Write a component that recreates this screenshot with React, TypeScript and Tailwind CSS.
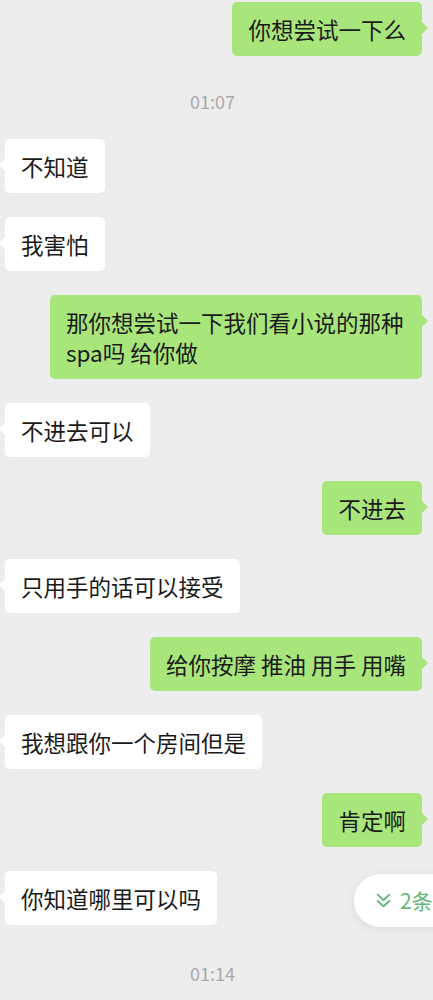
import React from "react";

const font = { fontFamily: '"Noto Sans CJK SC", "Noto Sans", sans-serif' };

function Left({ text }: { text: string }) {
  return (
    <div className="flex justify-start pl-[5px]">
      <div className="relative bg-white rounded-[5px] px-4 py-3 text-[22.5px] leading-[30px] text-[#1a1a1a] max-w-[370px]">
        <span className="absolute left-[-6px] top-[20px] w-0 h-0 border-y-[6px] border-y-transparent border-r-[6px] border-r-white" />
        {text}
      </div>
    </div>
  );
}

function Right({ text }: { text: string }) {
  return (
    <div className="flex justify-end pr-[11px]">
      <div className="relative bg-[#a8e67c] rounded-[5px] px-4 py-3 text-[22.5px] leading-[30px] text-[#1a1a1a] max-w-[372px]">
        <span className="absolute right-[-6px] top-[20px] w-0 h-0 border-y-[6px] border-y-transparent border-l-[6px] border-l-[#a8e67c]" />
        {text}
      </div>
    </div>
  );
}

function Time({ t, cls }: { t: string; cls: string }) {
  return (
    <div className={`text-center text-[18px] leading-[24px] text-[#a9a9a9] ${cls}`}>{t}</div>
  );
}

export default function App() {
  return (
    <div className="relative w-[433px] h-[1000px] bg-[#ededed] overflow-hidden" style={font}>
      <div className="pt-[2px] flex flex-col">
        <Right text="你想尝试一下么" />
        <Time t="01:07" cls="mt-[33px] mb-[26px] pr-[8px]" />
        <div className="flex flex-col gap-6">
          <Left text="不知道" />
          <Left text="我害怕" />
          <Right text="那你想尝试一下我们看小说的那种spa吗 给你做" />
          <Left text="不进去可以" />
          <Right text="不进去" />
          <Left text="只用手的话可以接受" />
          <Right text="给你按摩 推油 用手 用嘴" />
          <Left text="我想跟你一个房间但是" />
          <Right text="肯定啊" />
          <Left text="你知道哪里可以吗" />
        </div>
        <Time t="01:14" cls="mt-[36px] pr-[8px]" />
      </div>
      <div className="absolute left-[354px] top-[874px] h-[53px] w-[160px] bg-white rounded-l-full shadow-[0_2px_10px_rgba(0,0,0,0.08)] flex items-center pl-[21px] gap-[8px] whitespace-nowrap">
        <svg width="17" height="17" viewBox="0 0 16 16" fill="none" stroke="#5fb878" strokeWidth="1.8" strokeLinecap="round" strokeLinejoin="round">
          <path d="M2.5 2.5 L8 7.5 L13.5 2.5" />
          <path d="M2.5 8.5 L8 13.5 L13.5 8.5" />
        </svg>
        <span className="text-[21px] text-[#5fb878]">2条新消息</span>
      </div>
    </div>
  );
}
